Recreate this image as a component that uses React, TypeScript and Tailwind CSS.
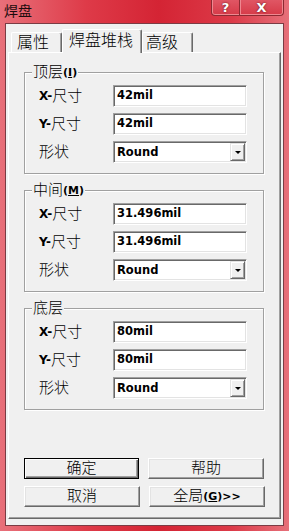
import type { ReactNode } from 'react';

const Sunken = ({ children, className = '' }: { children: ReactNode; className?: string }) => (
    <div className={`bg-white border border-t-[#a0a0a0] border-l-[#a0a0a0] border-r-white border-b-white shadow-[inset_1px_1px_0_#696969,inset_-1px_-1px_0_#e3e3e3] ${className}`}>
        {children}
    </div>
);

const Field = ({ value }: { value: string }) => (
    <Sunken className="w-[134px] h-[22px] flex items-center pl-[3px]">
        <span className="text-[11.5px] font-bold leading-none">{value}</span>
    </Sunken>
);

const Combo = ({ value }: { value: string }) => (
    <Sunken className="w-[134px] h-[22px] flex items-stretch p-[1px] pl-[3px]">
        <span className="flex-1 flex items-center text-[11.5px] font-bold leading-none pt-[1px]">{value}</span>
        <div className="w-[15px] bg-[#f0f0f0] border border-t-[#e3e3e3] border-l-[#e3e3e3] border-r-[#696969] border-b-[#696969] shadow-[inset_1px_1px_0_#fff,inset_-1px_-1px_0_#a0a0a0] flex items-center justify-center">
            <div className="w-0 h-0 border-l-[3px] border-r-[3px] border-t-[3px] border-l-transparent border-r-transparent border-t-black" />
        </div>
    </Sunken>
);

const Label = ({ children }: { children: ReactNode }) => (
    <div className="w-[88px] pl-[14px] flex items-center text-[15px] font-light leading-none">{children}</div>
);

const Row = ({ label, children }: { label: ReactNode; children: ReactNode }) => (
    <div className="flex items-center h-[22px]">
        <Label>{label}</Label>
        {children}
    </div>
);

const Size = ({ axis }: { axis: string }) => (
    <>
        <span className="text-[12px] font-bold">{axis}-</span>
        <span>尺寸</span>
    </>
);

const Group = ({ title, x, y }: { title: ReactNode; x: string; y: string }) => (
    <div className="relative w-[240px] h-[102px] border border-[#a0a0a0] shadow-[inset_1px_1px_0_#fff,1px_1px_0_#fff] pt-[12px] flex flex-col gap-[6px]">
        {/* legend sits over the top line */}
        <div className="absolute -top-[9px] left-[7px] px-[1px] bg-[#f0f0f0] text-[15px] font-light leading-[17px] flex items-center">{title}</div>
        <Row label={<Size axis="X" />}><Field value={x} /></Row>
        <Row label={<Size axis="Y" />}><Field value={y} /></Row>
        <Row label="形状"><Combo value="Round" /></Row>
    </div>
);

const Btn = ({ children, primary }: { children: ReactNode; primary?: boolean }) => (
    <div
        className={
            primary
                ? 'h-[21px] w-[115px] border border-black shadow-[inset_1px_1px_0_#fff,inset_-1px_-1px_0_#696969,inset_-2px_-2px_0_#a0a0a0] flex items-center justify-center text-[15px] font-light leading-none'
                : 'h-[21px] w-[116px] border border-t-white border-l-white border-r-[#696969] border-b-[#696969] shadow-[inset_-1px_-1px_0_#a0a0a0,inset_1px_1px_0_#e3e3e3] flex items-center justify-center text-[15px] font-light leading-none'
        }
    >
        {children}
    </div>
);

export default function App() {
    return (
        <div className="w-[289px] h-[531px] flex flex-col bg-[linear-gradient(90deg,#e8707a_0%,#de3a48_30%,#d42434_55%,#dc3a48_80%,#e6707a_100%)] font-['DejaVu_Sans','Noto_Sans_CJK_SC',sans-serif] text-black overflow-hidden">
            {/* Title bar */}
            <div className="h-[23px] flex items-start shrink-0">
                <span className="ml-[4px] mt-[3px] text-[14px] leading-[17px] text-[#1c0c0e]">焊盘</span>
                <div className="ml-auto mr-[5px] flex">
                    <div className="w-[29px] h-[16px] rounded-bl-[4px] border border-t-0 border-[#8c2a32] shadow-[inset_1px_0_0_#ee8890,inset_0_-1px_0_#ee8890] bg-[linear-gradient(180deg,#e05664,#d63a48)] flex items-center justify-center text-white font-bold text-[13px] leading-none [text-shadow:0_0_2px_#4a1016]">?</div>
                    <div className="w-[44px] h-[16px] rounded-br-[4px] border border-l-0 border-t-0 border-[#8c2a32] shadow-[inset_-1px_0_0_#ee8890,inset_0_-1px_0_#ee8890,inset_1px_0_0_#ee8890] bg-[linear-gradient(180deg,#e05664,#d63a48)] flex items-center justify-center text-white font-bold text-[13px] leading-none [text-shadow:0_0_2px_#4a1016]">X</div>
                </div>
            </div>

            {/* Client area */}
            <div className="mx-[5px] h-[503px] bg-[#f0f0f0] border border-[#7a3c44] px-[2px] pt-[5px] flex flex-col">
                {/* Tabs */}
                <div className="flex items-end h-[23px] pl-[3px] relative z-10 font-light">
                    <div className="w-[51px] h-[20px] border border-b-0 border-t-white border-l-white border-r-[#696969] rounded-t-[2px] shadow-[inset_-1px_0_0_#a0a0a0] text-[16px] leading-none pl-[5px] pt-[2px]">属性</div>
                    <div className="w-[80px] h-[24px] -mb-[1px] bg-[#f0f0f0] border border-b-0 border-t-white border-l-white border-r-[#696969] rounded-t-[2px] shadow-[inset_-1px_0_0_#a0a0a0] text-[16px] leading-none pl-[6px] pt-[3px]">焊盘堆栈</div>
                    <div className="w-[51px] h-[20px] border border-b-0 border-t-white border-l-white border-r-[#696969] rounded-t-[2px] shadow-[inset_-1px_0_0_#a0a0a0] text-[16px] leading-none pl-[3px] pt-[2px]">高级</div>
                </div>

                {/* Tab panel */}
                <div className="h-[467px] border border-t-white border-l-white border-r-[#696969] border-b-[#696969] shadow-[inset_-1px_-1px_0_#a0a0a0] pl-[15px] pt-[19px] flex flex-col">
                    <div className="flex flex-col gap-[16px]">
                        <Group
                            title={<><span>顶层</span><span className="text-[11px] font-bold">(<u>I</u>)</span></>}
                            x="42mil"
                            y="42mil"
                        />
                        <Group
                            title={<><span>中间</span><span className="text-[11px] font-bold">(<u>M</u>)</span></>}
                            x="31.496mil"
                            y="31.496mil"
                        />
                        <Group title={<span>底层</span>} x="80mil" y="80mil" />
                    </div>

                    <div className="mt-[48px] flex flex-col gap-[7px]">
                        <div className="flex gap-[9px]">
                            <Btn primary>确定</Btn>
                            <Btn>帮助</Btn>
                        </div>
                        <div className="flex gap-[9px]">
                            <Btn>取消</Btn>
                            <Btn>
                                <span>全局</span>
                                <span className="text-[11px] font-bold">(<u>G</u>)&gt;&gt;</span>
                            </Btn>
                        </div>
                    </div>
                </div>
            </div>
        </div>
    );
}
